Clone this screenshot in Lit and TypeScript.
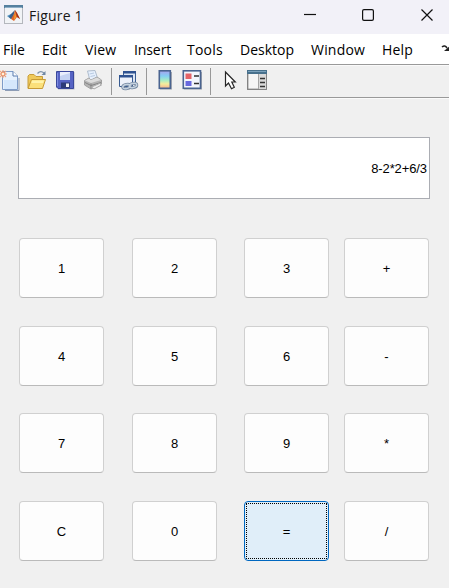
import { LitElement, html, css, svg } from "lit";
import { customElement, state } from "lit/decorators.js";

const menus: [string, number, number][] = [
  // label, slot width, letter spacing
  ["File", 39, -0.1],
  ["Edit", 43, 0],
  ["View", 49, 0.2],
  ["Insert", 53, -0.1],
  ["Tools", 53, 0.2],
  ["Desktop", 71, 0],
  ["Window", 71, 0.2],
  ["Help", 60, 0.2],
];

const keys = ["1", "2", "3", "+", "4", "5", "6", "-", "7", "8", "9", "*", "C", "0", "=", "/"];

const logo = svg`
  <rect x=".5" y=".5" width="18" height="18" fill="#f1f3f6" stroke="#b4b7bd"/>
  <path d="M0 0H19V3H0Z" fill="#55809f"/><path d="M1 2H18V3H1Z" fill="#8fafc8"/>
  <path d="M3 11L7 9L10 12L7 14Z" fill="#4a8cbd"/>
  <path d="M7 9L11 5L9 13L7 14L5 12Z" fill="#3c5f88"/>
  <path d="M7 14L10 9L11 5L13 8L16 14L13 12L10 16Z" fill="#e0662a"/>
  <path d="M11 5L13 8L16 14L13 12Z" fill="#a2331f"/>
  <path d="M11 7L12 12L10 15Z" fill="#f6a52c"/>`;

const newFile = svg`
  <path d="M19 8V20.5H5" fill="none" stroke="#8d9cb5"/>
  <path d="M2.5 1.5H13L17.5 6V19.5H2.5Z" fill="#e7f1fd" stroke="#7f9cc8"/>
  <path d="M4 10H17V19H4Z" fill="#d5e7fc"/>
  <path d="M13 1.5V6H17.5" fill="#fff" stroke="#587bad"/>
  <path d="M3 0V8M-1 4H7M0 1L6 7M6 1L0 7" stroke="#f0a27c" stroke-width="1.1"/>
  <circle cx="3" cy="4" r="2" fill="#fff0d8" stroke="#e8855a"/>`;

const open = svg`
  <path d="M1 18V6L2.5 4.5H7L9 6.5H15.5V10" fill="#efc95a" stroke="#c79d3a"/>
  <path d="M1 18.5L4.5 9.5H18.5L15.5 18.5Z" fill="#fbe07a" stroke="#c79a35"/>
  <path d="M5 10.5H17L16 13H4.5Z" fill="#fff3aa"/>
  <path d="M10.5 3.5Q13.5 0 17 3" fill="none" stroke="#7d93ab" stroke-width="1.3"/>
  <path d="M14.5 5H18.5V1Z" fill="#6f87a3"/>`;

const save = svg`
  <path d="M2 2H19.5V19.5H3Z" fill="#b4b6c4"/>
  <path d="M1.5 1.5H18.5V18.5H3L1.5 17Z" fill="#5663c4" stroke="#3a489b"/>
  <path d="M5 2H15V10H5Z" fill="#e9effc"/>
  <path d="M5 6L15 3V10H5Z" fill="#c4d3f2"/>
  <path d="M6 12.5H15V18H6Z" fill="#2c3a78"/>
  <path d="M11 13.5H14V17H11Z" fill="#f2f2f6"/>
  <path d="M2.5 3V16" stroke="#7d8ce0"/>`;

const print = svg`
  <path d="M4.5 1L12 .5L14.5 8L7 10.5Z" fill="#e6f0fd" stroke="#aebccd"/>
  <path d="M6.5 4L11 3M7.5 6.5L12 5.5" stroke="#b8cae2"/>
  <path d="M1.5 10.5L6 8L8 10L14 7L18.5 10V14L8 19L1.5 15Z" fill="#b4b4b4" stroke="#a0a0a0"/>
  <path d="M2 10.5L8 13L18 10L14 7.5L8 10L6 8.5Z" fill="#dcdcdc"/>
  <path d="M8 13.5V18.5M2 12.5L8 15.5L18 12.5" fill="none" stroke="#848484"/>
  <path d="M8.5 17L16.5 13.5L18.5 15L11 19Z" fill="#ececec" stroke="#aaa"/>`;

const link = svg`
  <path d="M5.5 1.5H17.5V12.5H5.5Z" fill="#dce6f4" stroke="#395c91"/>
  <path d="M5 1H18V3.5H5Z" fill="#2f5290"/>
  <path d="M1.5 5.5H14.5V16.5H1.5Z" fill="#eef2fa" stroke="#395c91"/>
  <path d="M1 5H15V7.5H1Z" fill="#2f5290"/>
  <g fill="none" stroke="#74869e" stroke-width="3"><ellipse cx="8.5" cy="16.5" rx="3.8" ry="2.1" transform="rotate(-12 8.5 16.5)"/><ellipse cx="15" cy="15.5" rx="3.8" ry="2.1" transform="rotate(-12 15 15.5)"/></g>
  <g fill="none" stroke="#c5d3e1" stroke-width="1.4"><ellipse cx="8.5" cy="16.5" rx="3.8" ry="2.1" transform="rotate(-12 8.5 16.5)"/><ellipse cx="15" cy="15.5" rx="3.8" ry="2.1" transform="rotate(-12 15 15.5)"/></g>`;

const colorbar = svg`
  <defs><linearGradient id="g" x1="0" x2="0" y1="0" y2="1">
    <stop offset="0" stop-color="#a9a2ee"/><stop offset=".3" stop-color="#83cff3"/>
    <stop offset=".55" stop-color="#a9edc4"/><stop offset=".75" stop-color="#f4ec9c"/><stop offset="1" stop-color="#f3b08f"/>
  </linearGradient></defs>
  <path d="M2 2H14V19.5H2Z" fill="#a3a7b1"/>
  <rect x="1.3" y=".8" width="11" height="17.5" fill="url(#g)" stroke="#4a6490" stroke-width="1.6"/>`;

const legend = svg`
  <path d="M2 2H20V19.5H2Z" fill="#a3a7b1"/>
  <rect x="1.3" y=".8" width="17.2" height="17.5" fill="#f3f6fd" stroke="#4a6490" stroke-width="1.6"/>
  <path d="M3.5 3.5H9.5V9H3.5Z" fill="#e56468"/><path d="M3.5 11H9.5V16H3.5Z" fill="#6767df"/>
  <path d="M12 6H17M12 13.5H17" stroke="#303030" stroke-width="1.4"/>`;

const pointer = svg`
  <path d="M1.5 2V16L4.5 13L7.5 18.7L10.3 17.2L7.8 12H11.3Z" fill="#fff" stroke="#262626" stroke-width="1.2"/>`;

const inspector = svg`
  <rect x=".7" y=".7" width="18.6" height="18.6" fill="#f5f5f5" stroke="#7d7d7d" stroke-width="1.3"/>
  <path d="M0 0H20V4H0Z" fill="#47708c"/><path d="M1 1H19V2H1Z" fill="#7ba1bb"/>
  <path d="M11 4H19V19H11Z" fill="#d9d9d9"/><path d="M11.5 4V19" stroke="#a5a5a5"/>
  <path d="M13 8.5H18M13 12.5H18M13 16.5H18" stroke="#333" stroke-width="1.4"/>`;

@customElement("app-root")
export class AppRoot extends LitElement {
  @state() private expression = "8-2*2+6/3";
  @state() private active = "=";

  static styles = css`
    :host { display: block; width: 449px; height: 588px; overflow: hidden; background: #f0f0f0; color: #000; }
    * { box-sizing: border-box; }
    svg { display: block; overflow: visible; flex: none; }
    .title { height: 34px; background: #f2f1f8; display: flex; padding: 5px 15px 0 4px; font: 14px/22px "Open Sans", sans-serif; }
    .title span { margin-left: 6px; letter-spacing: .2px; flex: 1; color: #171717; }
    .controls { margin-top: 4px; }
    .menu { height: 30px; background: #fff; display: flex; padding-left: 3px; font: 14px/31px "Open Sans", sans-serif; overflow: hidden; white-space: nowrap; }
    .menu span { flex: none; }
    .menu svg { margin-top: 11px; }
    .tools { height: 35px; border-top: 1px solid #999; border-bottom: 1px solid #fafafa; display: flex; padding-top: 5px; box-shadow: inset 0 1px #fafafa, inset 0 -1px #999; }
    .tools svg { margin-right: 8px; }
    .sep { width: 1px; height: 27px; background: #989898; margin-top: -2px; flex: none; }
    .figure { padding: 38px 19px 0 18px; font: 13px "Liberation Sans", Arial, sans-serif; }
    .display { height: 62px; border: 1px solid #abadb3; background: #fff; display: flex; align-items: center; justify-content: flex-end; padding-right: 2px; letter-spacing: -.1px; }
    .keys { display: grid; grid-template-columns: 113px 112px 100px 85px; grid-template-rows: 88px 87px 88px 60px; margin: 39px 0 0 1px; }
    .key { width: 85px; height: 60px; padding: 0; border: 1px solid #d0d0d0; border-bottom-color: #bababa; border-radius: 4px; background: #fdfdfd; font: inherit; color: #000; }
    .key.active { border-color: #0067c0; background: #e0eef9; padding: 1px; }
    .focus { display: flex; height: 56px; border: 1px dotted #000; align-items: center; justify-content: center; }
    .gap2 { margin-left: 2px; }
    .gap6 { margin-left: 6px; }
    .gap11 { margin-left: 11px; }
    .gap13 { margin-left: 13px; }
  `;

  private icon(art: unknown, w = 20, cls = "") {
    return html`<svg class=${cls} width=${w} height="20" viewBox="0 0 ${w} 20">${art}</svg>`;
  }

  render() {
    return html`
      <div class="title">
        <svg width="19" height="19">${logo}</svg><span>Figure 1</span>
        <svg class="controls" width="130" height="12" fill="none" stroke="#111" stroke-width="1.2">
          <path d="M0 5.5H12"/><rect x="58.6" y=".6" width="10.8" height="10.8" rx="1.4"/><path d="M117.5 .5L128.5 11.5M128.5 .5L117.5 11.5"/>
        </svg>
      </div>
      <div class="menu">
        ${menus.map(([t, w, s]) => html`<span style="width:${w}px;letter-spacing:${s}px">${t}</span>`)}
        <svg width="12" height="9"><path d="M0 2Q3 -.5 5 3" fill="none" stroke="#222" stroke-width="1.6"/><path d="M2 6H8V1Z" fill="#222"/></svg>
      </div>
      <div class="tools">
        ${this.icon(newFile, 19)}${this.icon(open)}${this.icon(save)}${this.icon(print)}
        <div class="sep"></div>${this.icon(link, 20, "gap6")}
        <div class="sep"></div>${this.icon(colorbar, 14, "gap11")}${this.icon(legend, 20, "gap2")}
        <div class="sep"></div>${this.icon(pointer, 13, "gap13")}${this.icon(inspector, 20, "gap2")}
      </div>
      <div class="figure">
        <div class="display">${this.expression}</div>
        <div class="keys">
          ${keys.map((k) => html`<button class="key ${k === this.active ? "active" : ""}">${k === this.active ? html`<span class="focus">${k}</span>` : k}</button>`)}
        </div>
      </div>`;
  }
}
